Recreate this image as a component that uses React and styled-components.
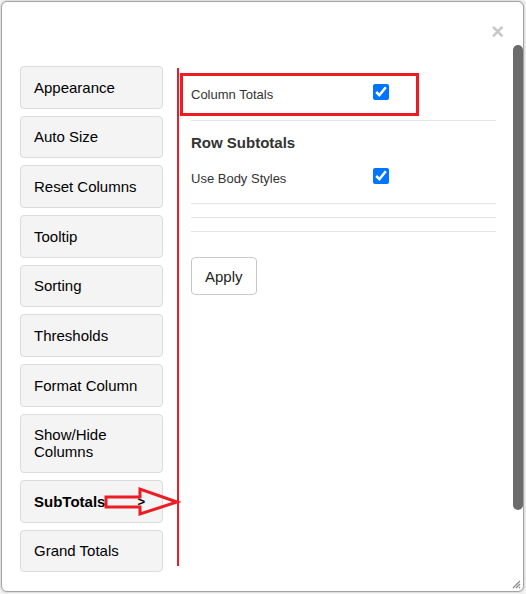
import React from 'react'
import styled, { createGlobalStyle } from 'styled-components'

const GlobalStyle = createGlobalStyle`
  html, body {
    margin: 0;
    background: #f4f4f4;
  }
  body {
    font-family: "Liberation Sans", Arial, sans-serif;
  }
  #root {
    padding: 1px;
  }
`

const RED = '#ec1c24'

const menuItems = [
  'Appearance',
  'Auto Size',
  'Reset Columns',
  'Tooltip',
  'Sorting',
  'Thresholds',
  'Format Column',
  'Show/Hide Columns',
  'SubTotals',
  'Grand Totals',
]

const App = () => {
  return (
    <>
      <GlobalStyle />
      <Dialog>
        <Header>
          <CloseButton>×</CloseButton>
        </Header>
        <Body>
          <Main>
            <Sidebar>
              {menuItems.map(item => (
                <MenuButton key={item} active={item === 'SubTotals'}>
                  <span>{item}</span>
                  {item === 'SubTotals' ? (
                    <>
                      <Chevron>&gt;</Chevron>
                      <ArrowMark width="80" height="32" viewBox="0 0 80 32">
                        <polygon
                          points="2,10 36,10 36,2 73,15 36,27 36,20 2,20"
                          fill="none"
                          stroke={RED}
                          strokeWidth="3"
                        />
                      </ArrowMark>
                    </>
                  ) : null}
                </MenuButton>
              ))}
            </Sidebar>
            <Panel>
              <HighlightRow>
                <Label>Column Totals</Label>
                <Check type="checkbox" defaultChecked />
              </HighlightRow>
              <Divider top={4} />
              <Heading>Row Subtotals</Heading>
              <OptionRow>
                <Label>Use Body Styles</Label>
                <Check type="checkbox" defaultChecked />
              </OptionRow>
              <Divider top={7} />
              <Divider top={13} />
              <Divider top={13} />
              <ApplyButton>Apply</ApplyButton>
            </Panel>
          </Main>
          <Track>
            <Thumb />
          </Track>
        </Body>
        <Grip width="9" height="9" viewBox="0 0 9 9">
          <path d="M8 1 L1 8 M8 4 L4 8 M8 7 L7 8" stroke="#8a8a8a" strokeWidth="1.2" />
        </Grip>
      </Dialog>
    </>
  )
}

const Dialog = styled.div`
  position: relative;
  box-sizing: border-box;
  width: 523px;
  height: 591px;
  background: #fff;
  border: 1px solid #a3a3a3;
  border-radius: 6px;
  box-shadow: 0 0 3px rgba(0, 0, 0, 0.25);
  display: flex;
  flex-direction: column;
  overflow: hidden;
`

const Header = styled.div`
  height: 42px;
  display: flex;
  justify-content: flex-end;
  align-items: flex-start;
  padding-right: 19px;
`

const CloseButton = styled.span`
  margin-top: 19px;
  font-size: 22px;
  line-height: 22px;
  font-weight: bold;
  color: #c8c8c8;
`

const Body = styled.div`
  flex: 1;
  display: flex;
`

const Main = styled.div`
  flex: 1;
  display: flex;
  gap: 14px;
  padding: 22px 17px 0 18px;
  align-items: flex-start;
`

const Sidebar = styled.div`
  width: 143px;
  display: flex;
  flex-direction: column;
  gap: 7.2px;
`

const MenuButton = styled.div`
  position: relative;
  box-sizing: border-box;
  display: flex;
  justify-content: space-between;
  align-items: center;
  padding: 12.5px 17px 11.5px 13px;
  background: #f4f4f4;
  border: 1px solid #dcdcdc;
  border-radius: 4px;
  font-size: 15px;
  line-height: 1.1;
  color: #000;
  font-weight: ${({ active }) => (active ? 'bold' : 'normal')};
`

const Chevron = styled.span`
  font-size: 13px;
`

const ArrowMark = styled.svg`
  position: absolute;
  left: 83px;
  top: 6px;
  overflow: visible;
`

const Panel = styled.div`
  flex: 1;
  align-self: stretch;
  margin: 2px 0 6px;
  border-left: 2px solid ${RED};
  display: flex;
  flex-direction: column;
  align-items: flex-start;
  height: 498px;
`

const HighlightRow = styled.div`
  box-sizing: border-box;
  margin: 5px 0 0 1px;
  width: 239px;
  height: 43px;
  border: 3px solid ${RED};
  padding-left: 8px;
  display: flex;
  align-items: center;
`

const OptionRow = styled.div`
  margin: 8px 0 0 12px;
  height: 36px;
  display: flex;
  align-items: center;
`

const Label = styled.span`
  width: 182px;
  font-size: 13px;
  color: #333;
`

const Check = styled.input`
  width: 16px;
  height: 16px;
  margin: 0 0 5px;
  accent-color: #0075ff;
`

const Divider = styled.div`
  align-self: stretch;
  margin: ${({ top }) => top}px 0 0 12px;
  border-top: 1px solid #e5e5e5;
`

const Heading = styled.div`
  margin: 13px 0 0 12px;
  font-size: 15px;
  line-height: 18px;
  font-weight: bold;
  color: #333;
`

const ApplyButton = styled.button`
  margin: 25px 0 0 12px;
  height: 38px;
  padding: 0 13px;
  background: #fff;
  border: 1px solid #c8c8c8;
  border-radius: 4px;
  font-family: "Liberation Sans", Arial, sans-serif;
  font-size: 15px;
  color: #222;
`

const Track = styled.div`
  width: 10px;
`

const Thumb = styled.div`
  margin-top: 1px;
  height: 465px;
  background: #6b6b6b;
  border-radius: 5px;
`

const Grip = styled.svg`
  position: absolute;
  right: 2px;
  bottom: 2px;
`

export default App
